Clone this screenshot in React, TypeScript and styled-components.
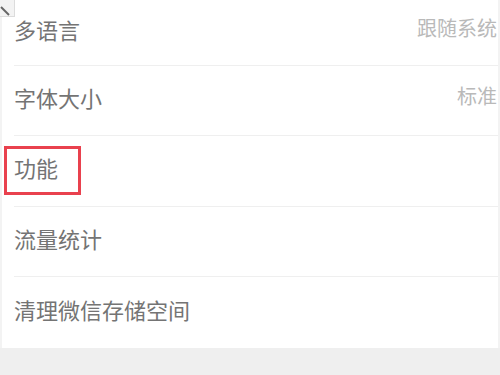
import React from 'react';
import styled, { createGlobalStyle } from 'styled-components';

const GlobalStyle = createGlobalStyle`
  html, body {
    margin: 0;
    padding: 0;
    background: #efefef;
    font-family: "Noto Sans CJK SC", "Noto Sans", sans-serif;
  }
`;

const Page = styled.div`
  position: relative;
  width: 500px;
  height: 375px;
  overflow: hidden;
  background: #efefef;
`;

const List = styled.div`
  background: #ffffff;
  border-left: 2px solid #f3f3f3;
  border-right: 2px solid #f3f3f3;
  padding-left: 12px;
  height: 348px;
  box-sizing: border-box;
`;

const Row = styled.div<{ $height: number; $last?: boolean }>`
  height: ${(p) => p.$height}px;
  display: flex;
  align-items: center;
  justify-content: space-between;
  padding-right: 1px;
  padding-bottom: 8px;
  box-sizing: border-box;
  border-bottom: ${(p) => (p.$last ? 'none' : '1px solid #efefef')};
`;

const Label = styled.span<{ $highlight?: boolean }>`
  position: relative;
  font-size: 22px;
  color: #747474;
  line-height: 1;

  ${(p) =>
    p.$highlight &&
    `
    &::after {
      content: '';
      position: absolute;
      left: -10px;
      top: -10px;
      width: 77px;
      height: 49px;
      border: 3px solid #e9414e;
      box-sizing: border-box;
    }
  `}
`;

const Value = styled.span`
  font-size: 20px;
  color: #b9b9b9;
  line-height: 1;
  padding-bottom: 1px;
`;

const CornerTab = styled.div`
  position: absolute;
  left: 0;
  top: 0;
  width: 14px;
  height: 16px;
  background: #f3f3f3;
  border-right: 1px solid #dcdcdc;
  border-bottom: 1px solid #dcdcdc;
`;

const rows = [
  { label: '多语言', value: '跟随系统', height: 66 },
  { label: '字体大小', value: '标准', height: 70 },
  { label: '功能', highlight: true, height: 71 },
  { label: '流量统计', height: 70 },
  { label: '清理微信存储空间', height: 71, last: true },
];

const App: React.FC = () => {
  return (
    <Page>
      <GlobalStyle />
      <List>
        {rows.map((r) => (
          <Row key={r.label} $height={r.height} $last={r.last}>
            <Label $highlight={r.highlight}>{r.label}</Label>
            {r.value && <Value>{r.value}</Value>}
          </Row>
        ))}
      </List>
      <CornerTab>
        <svg width="14" height="16" viewBox="0 0 14 16">
          <line x1="1" y1="4" x2="9" y2="12" stroke="#666" strokeWidth="2" />
        </svg>
      </CornerTab>
    </Page>
  );
};

export default App;
